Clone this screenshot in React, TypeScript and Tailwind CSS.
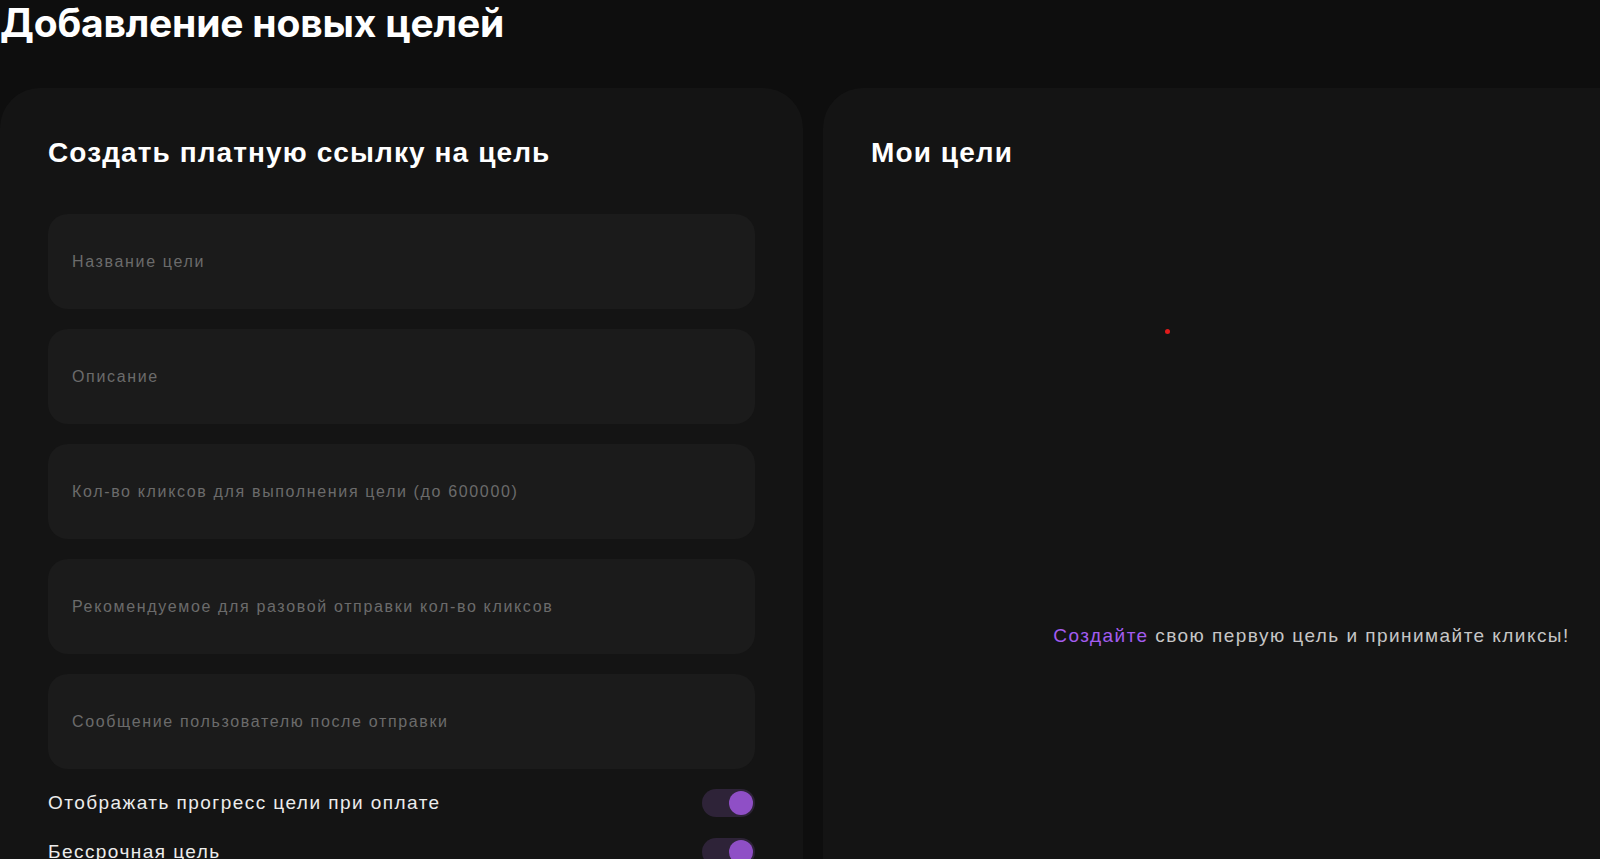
import { useState } from 'react'

const fields = [
    'Название цели',
    'Описание',
    'Кол-во кликсов для выполнения цели (до 600000)',
    'Рекомендуемое для разовой отправки кол-во кликсов',
    'Сообщение пользователю после отправки',
]

function Toggle({ checked, onChange }: { checked: boolean, onChange: () => void }) {
    return (
        <button
            onClick={onChange}
            className={`flex h-[28px] w-[53px] shrink-0 items-center rounded-full px-[2px] ${checked ? 'justify-end bg-[#2e2338]' : 'justify-start bg-[#2a2a2a]'}`}
        >
            <span className={`h-[24px] w-[24px] rounded-full ${checked ? 'bg-[#8f4fc6]' : 'bg-[#555]'}`} />
        </button>
    )
}

function App() {

    const [showProgress, setShowProgress] = useState(true)
    const [noDeadline, setNoDeadline] = useState(true)

    return (
        <main className="h-[859px] w-full overflow-hidden bg-[#0e0e0e] font-['Liberation_Sans',Arial,sans-serif] text-white">
            <h1 className="pt-[3px] font-['Inter',sans-serif] text-[39px] font-bold leading-none tracking-[-0.2px] text-white">
                Добавление новых целей
            </h1>

            <div className="mt-[46px] flex w-[1800px] gap-5">
                <section className="w-[803px] shrink-0 rounded-t-[40px] bg-[#141414] px-12 pt-[51px] pb-10">
                    <h2 className="text-[28px] font-bold leading-[28px] tracking-[1.1px]">
                        Создать платную ссылку на цель
                    </h2>

                    <div className="mt-[47px] flex flex-col gap-[20px]">
                        {fields.map(field => (
                            <input
                                key={field}
                                placeholder={field}
                                className="h-[95px] w-full rounded-[20px] bg-[#1b1b1b] px-6 text-base tracking-[1.65px] text-white outline-none placeholder:text-[#6b6b6b]"
                            />
                        ))}
                    </div>

                    <div className="mt-[20px] flex flex-col gap-[20px]">
                        <label className="flex items-center justify-between">
                            <span className="text-[19px] tracking-[1.45px] text-[#ececec]">Отображать прогресс цели при оплате</span>
                            <Toggle checked={showProgress} onChange={() => setShowProgress(!showProgress)} />
                        </label>
                        <label className="flex items-center justify-between">
                            <span className="text-[19px] tracking-[1.45px] text-[#ececec]">Бессрочная цель</span>
                            <Toggle checked={noDeadline} onChange={() => setNoDeadline(!noDeadline)} />
                        </label>
                    </div>
                </section>

                <section className="relative w-[977px] shrink-0 rounded-t-[40px] bg-[#141414] px-12 pt-[51px]">
                    <h2 className="text-[28px] font-bold leading-[28px] tracking-[1.1px]">
                        Мои цели
                    </h2>

                    {/* loader */}
                    <span className="absolute left-[342px] top-[241px] h-[5px] w-[5px] rounded-full bg-[#e01b1b]" />

                    <p className="pt-[457px] text-center text-[19px] leading-6 tracking-[1.45px] text-[#c6c6c6]">
                        <span className="text-[#a35cf0]">Создайте</span> свою первую цель и принимайте кликсы!
                    </p>
                </section>
            </div>
        </main>
    )
}

export default App
